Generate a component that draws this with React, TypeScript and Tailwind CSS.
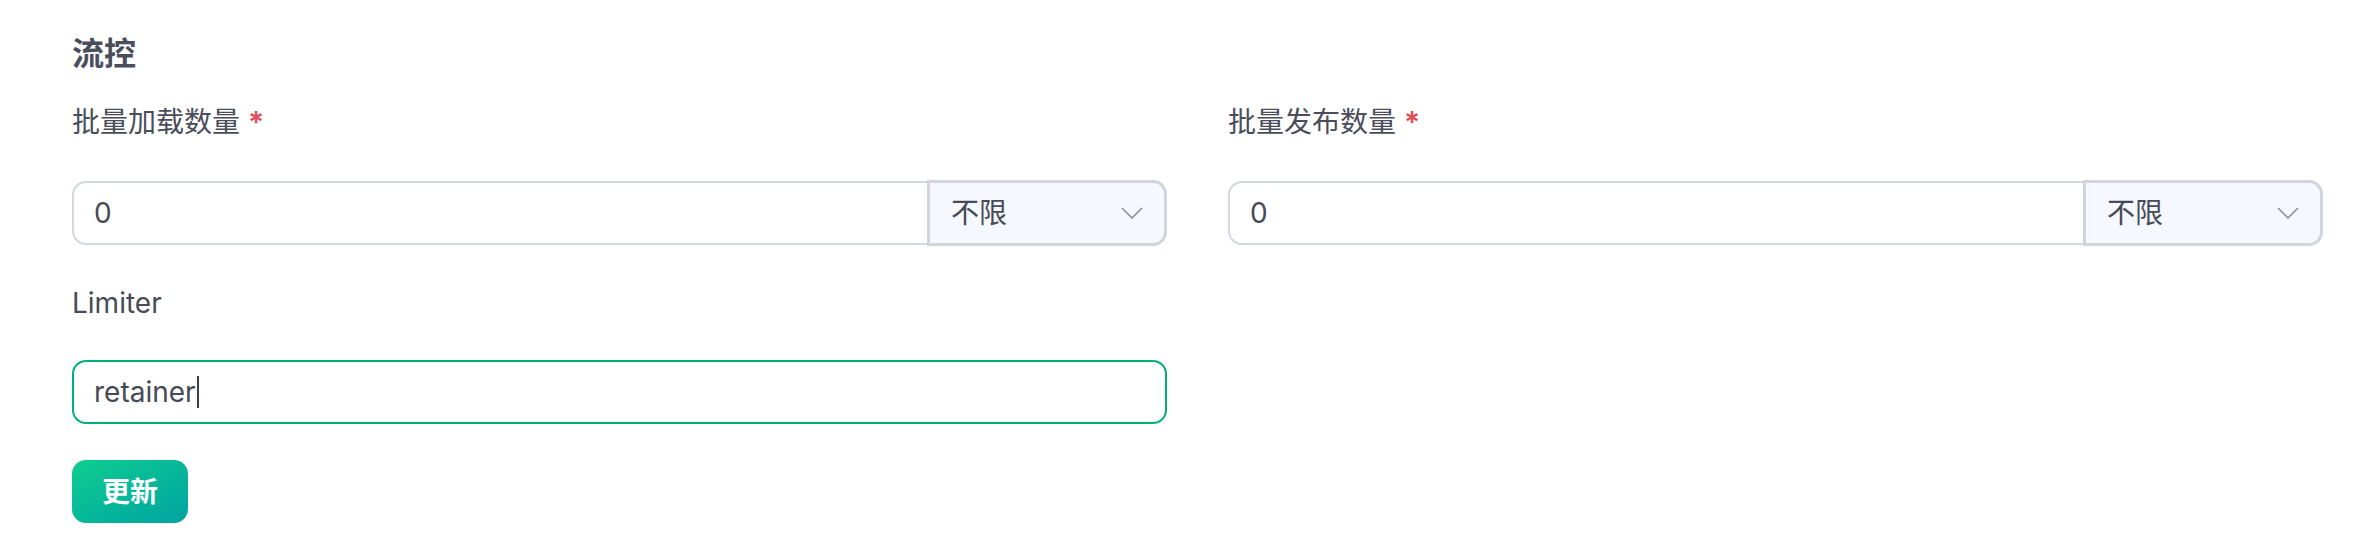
import React from "react";

const font = { fontFamily: '"Inter", "Noto Sans CJK SC", sans-serif' };

function Chevron() {
  return (
    <svg width="22" height="12" viewBox="0 0 22 12" fill="none">
      <polyline points="1,1 11,11 21,1" stroke="#8d919b" strokeWidth="1.6" fill="none" />
    </svg>
  );
}

function NumberField({ label }: { label: string }) {
  return (
    <div className="flex flex-col">
      <div className="h-[40px] leading-[40px] text-[28px] text-[#4a4d5a] flex items-center">
        <span>{label}</span>
        <span className="ml-[8px] text-[30px] font-semibold text-[#e34d59]">*</span>
      </div>
      <div className="mt-[38px] flex items-center h-[66px]">
        <div className="flex-1 h-[64px] border-2 border-r-0 border-[#d3d7df] rounded-l-[14px] bg-white flex items-center pl-[20px] text-[28px] text-[#474a57]">
          0
        </div>
        <div className="w-[240px] h-[66px] border-[3px] border-[#d0d4dc] rounded-r-[14px] bg-[#f5f8fe] flex items-center justify-between pl-[21px] pr-[21px] text-[28px] text-[#474a57]">
          <span>不限</span>
          <Chevron />
        </div>
      </div>
    </div>
  );
}

export default function App() {
  return (
    <div className="w-[2354px] h-[544px] bg-white pl-[72px] pr-[31px] pt-[30px]" style={font}>
      <div className="h-[48px] leading-[48px] text-[32px] font-bold text-[#4a4d5b]">流控</div>
      <div className="mt-[24px] grid grid-cols-2 gap-x-[61px]">
        <NumberField label="批量加载数量" />
        <NumberField label="批量发布数量" />
      </div>
      <div className="w-[1095px]">
        <div className="mt-[37px] h-[40px] leading-[40px] text-[28px] text-[#474a58]">Limiter</div>
        <div className="mt-[37px] h-[64px] border-2 border-[#00b074] rounded-[14px] flex items-center pl-[20px] text-[28px] text-[#464a58]">
          <span>retainer</span>
          <span className="inline-block w-[2px] h-[32px] bg-[#3c3f4a] ml-[1px]" />
        </div>
        <button className="mt-[36px] w-[116px] h-[63px] rounded-[14px] bg-linear-to-br from-[#10cd8e] to-[#04a3a1] text-white text-[28px] font-bold flex items-center justify-center">
          更新
        </button>
      </div>
    </div>
  );
}
